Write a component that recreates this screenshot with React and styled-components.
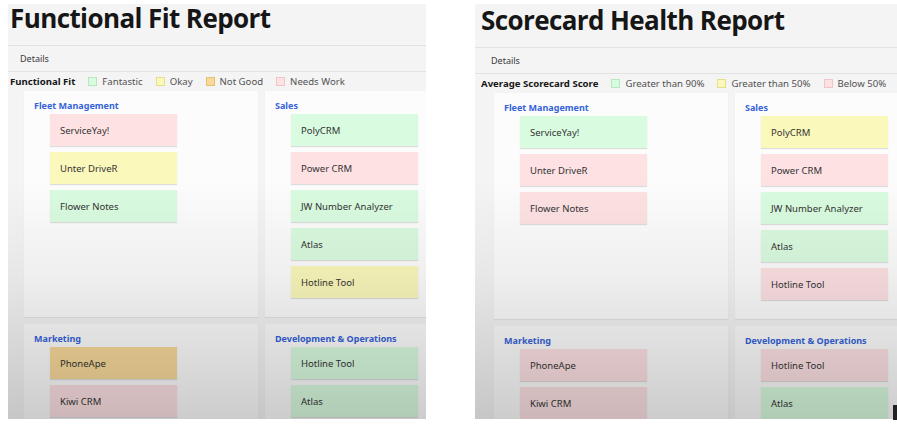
import React from "react";
import styled, { createGlobalStyle } from "styled-components";

const Global = createGlobalStyle`
  body {
    margin: 0;
    background: #ffffff;
    font-family: "Noto Sans", "Open Sans", sans-serif;
  }
`;

const fits = {
  green: "#d9fbdf",
  yellow: "#fbf8bb",
  orange: "#f8d99a",
  pink: "#fde1e3",
};

const legendBorder = {
  green: "#b5e8bf",
  yellow: "#e6df8a",
  orange: "#e8c071",
  pink: "#f2c4c9",
};

const reports = [
  {
    title: "Functional Fit Report",
    label: "Functional Fit",
    shift: 0,
    inset: 2,
    cardInset: 16,
    legend: [
      ["green", "Fantastic"],
      ["yellow", "Okay"],
      ["orange", "Not Good"],
      ["pink", "Needs Work"],
    ],
    groups: [
      {
        name: "Fleet Management",
        apps: [
          ["ServiceYay!", "pink"],
          ["Unter DriveR", "yellow"],
          ["Flower Notes", "green"],
        ],
      },
      {
        name: "Sales",
        apps: [
          ["PolyCRM", "green"],
          ["Power CRM", "pink"],
          ["JW Number Analyzer", "green"],
          ["Atlas", "green"],
          ["Hotline Tool", "yellow"],
        ],
      },
      {
        name: "Marketing",
        apps: [
          ["PhoneApe", "orange"],
          ["Kiwi CRM", "pink"],
        ],
      },
      {
        name: "Development & Operations",
        apps: [
          ["Hotline Tool", "green"],
          ["Atlas", "green"],
        ],
      },
    ],
  },
  {
    title: "Scorecard Health Report",
    label: "Average Scorecard Score",
    shift: 2,
    inset: 6,
    cardInset: 19,
    legend: [
      ["green", "Greater than 90%"],
      ["yellow", "Greater than 50%"],
      ["pink", "Below 50%"],
    ],
    groups: [
      {
        name: "Fleet Management",
        apps: [
          ["ServiceYay!", "green"],
          ["Unter DriveR", "pink"],
          ["Flower Notes", "pink"],
        ],
      },
      {
        name: "Sales",
        apps: [
          ["PolyCRM", "yellow"],
          ["Power CRM", "pink"],
          ["JW Number Analyzer", "green"],
          ["Atlas", "green"],
          ["Hotline Tool", "pink"],
        ],
      },
      {
        name: "Marketing",
        apps: [
          ["PhoneApe", "pink"],
          ["Kiwi CRM", "pink"],
        ],
      },
      {
        name: "Development & Operations",
        apps: [
          ["Hotline Tool", "pink"],
          ["Atlas", "green"],
        ],
      },
    ],
  },
];

const Page = styled.div`
  display: flex;
  gap: 49px;
  padding: 4px 0 0 8px;
  height: 424px;
  box-sizing: border-box;
  overflow: hidden;
  position: relative;
`;

const Panel = styled.section`
  position: relative;
  display: flex;
  flex-direction: column;
  width: ${(p) => p.$width}px;
  height: 415px;
  flex-shrink: 0;
  background: #f4f4f4;
  padding-top: ${(p) => p.$shift}px;
  box-sizing: border-box;

  &::after {
    content: "";
    position: absolute;
    inset: 0;
    pointer-events: none;
    background: linear-gradient(
      to bottom,
      rgba(0, 0, 0, 0) 0%,
      rgba(0, 0, 0, 0) 42%,
      rgba(0, 0, 0, 0.05) 65%,
      rgba(0, 0, 0, 0.19) 100%
    );
  }
`;

const Title = styled.h1`
  margin: 0;
  padding: 0 0 0 ${(p) => p.$inset}px;
  height: 41px;
  flex-shrink: 0;
  font-family: "Open Sans", "Noto Sans", sans-serif;
  font-weight: 700;
  font-size: 26px;
  line-height: 28px;
  color: #161616;
  letter-spacing: -0.6px;
  white-space: nowrap;
`;

const Tabs = styled.div`
  border-top: 1px solid #e2e2e2;
  border-bottom: 1px solid #e2e2e2;
  height: 25px;
  flex-shrink: 0;
  display: flex;
  align-items: center;
  padding-left: ${(p) => p.$inset + 10}px;
  font-size: 9px;
  color: #3a3a3a;
`;

const Legend = styled.div`
  display: flex;
  align-items: center;
  height: 18px;
  flex-shrink: 0;
  padding-left: ${(p) => p.$inset}px;
  font-size: 9.6px;
  color: #525252;
  white-space: nowrap;
`;

const LegendLabel = styled.span`
  font-weight: 700;
  color: #161616;
  margin-right: 13px;
`;

const LegendItem = styled.span`
  display: flex;
  align-items: center;
  margin-right: 13px;
`;

const Swatch = styled.span`
  width: 7px;
  height: 7px;
  margin-right: 5px;
  background: ${(p) => fits[p.$fit]};
  border: 1px solid ${(p) => legendBorder[p.$fit]};
`;

const Grid = styled.div`
  flex: 1;
  min-height: 0;
  overflow: hidden;
  display: grid;
  grid-template-columns: 234px 234px;
  grid-template-rows: 226px auto;
  gap: 7px;
  margin-top: 1px;
  padding-left: ${(p) => p.$inset}px;
`;

const Card = styled.div`
  background: #fcfcfc;
  padding: 9px 0 0 10px;
  box-shadow: 0 1px 1px rgba(0, 0, 0, 0.06);
`;

const CardTitle = styled.h3`
  margin: 0 0 2px;
  font-size: 9px;
  line-height: 12px;
  font-weight: 700;
  color: #3563d9;
`;

const AppList = styled.div`
  display: flex;
  flex-direction: column;
  gap: 6px;
  padding-left: 16px;
`;

const App = styled.div`
  width: 127px;
  height: 32px;
  box-sizing: border-box;
  display: flex;
  align-items: center;
  padding-left: 10px;
  font-size: 9.5px;
  color: #333333;
  background: ${(p) => fits[p.$fit]};
  box-shadow: 0 1px 1px rgba(0, 0, 0, 0.12);
`;

const EdgeMark = styled.div`
  position: absolute;
  right: 0;
  bottom: 4px;
  width: 4px;
  height: 15px;
  background: #222;
`;

function Report({ report, width }) {
  return (
    <Panel $width={width} $shift={report.shift}>
      <Title $inset={report.inset}>{report.title}</Title>
      <Tabs $inset={report.inset}>Details</Tabs>
      <Legend $inset={report.inset}>
        <LegendLabel>{report.label}</LegendLabel>
        {report.legend.map(([fit, text]) => (
          <LegendItem key={text}>
            <Swatch $fit={fit} />
            {text}
          </LegendItem>
        ))}
      </Legend>
      <Grid $inset={report.cardInset}>
        {report.groups.map((group) => (
          <Card key={group.name}>
            <CardTitle>{group.name}</CardTitle>
            <AppList>
              {group.apps.map(([name, fit]) => (
                <App key={name} $fit={fit}>
                  {name}
                </App>
              ))}
            </AppList>
          </Card>
        ))}
      </Grid>
    </Panel>
  );
}

export default function Main() {
  return (
    <>
      <Global />
      <Page>
        <Report report={reports[0]} width={418} />
        <Report report={reports[1]} width={422} />
        <EdgeMark />
      </Page>
    </>
  );
}
